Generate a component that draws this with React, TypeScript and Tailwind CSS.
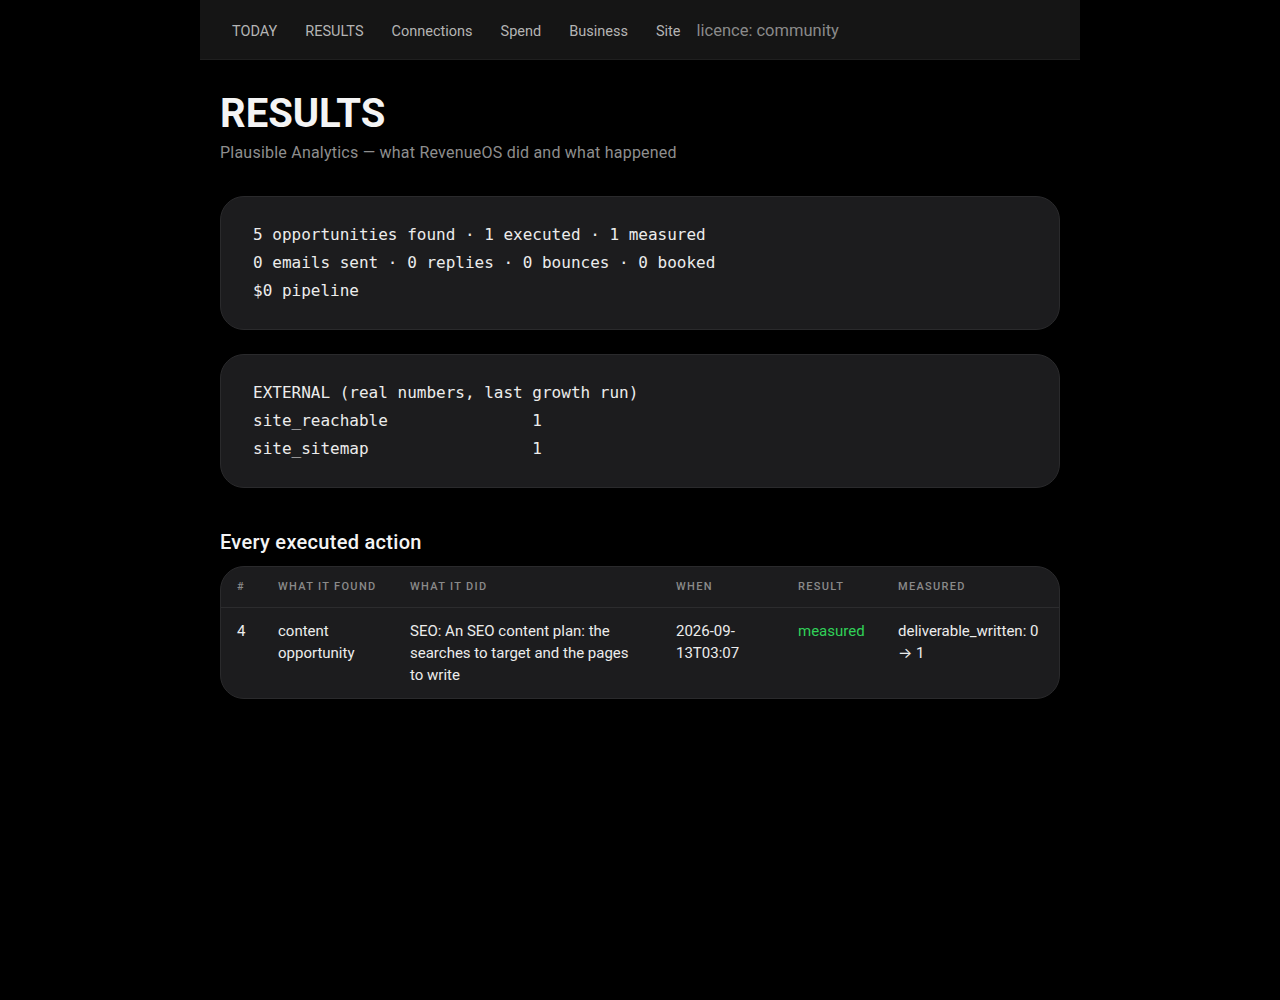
import React from 'react';

const navItems = ['TODAY', 'RESULTS', 'Connections', 'Spend', 'Business', 'Site'];

const summary = [
  '5 opportunities found · 1 executed · 1 measured',
  '0 emails sent · 0 replies · 0 bounces · 0 booked',
  '$0 pipeline',
];

const external = [
  'EXTERNAL (real numbers, last growth run)',
  'site_reachable               1',
  'site_sitemap                 1',
];

const actions = [
  {
    id: 4,
    found: 'content opportunity',
    did: 'SEO: An SEO content plan: the searches to target and the pages to write',
    when: '2026-09-13T03:07',
    result: 'measured',
    measured: 'deliverable_written: 0 → 1',
  },
];

function MonoCard({ lines }: { lines: string[] }) {
  return (
    <div className="mb-6 rounded-3xl border border-[#2a2a2c] bg-[#1c1c1e] px-8 py-6">
      <pre className="font-['DejaVu_Sans_Mono',monospace] text-base leading-7 text-[#ececec] whitespace-pre">
        {lines.join('\n')}
      </pre>
    </div>
  );
}

export default function App() {
  return (
    <div className="min-h-screen bg-black font-['Roboto','Inter',sans-serif] text-white">
      <div className="mx-auto w-[880px]">
        <nav className="flex h-[60px] items-center gap-1 border-b border-[#1f1f1f] bg-[#151515] px-5 pt-1">
          {navItems.map((item) => (
            <a key={item} className="px-3 text-[14.5px] text-[#b4b4b4]">
              {item}
            </a>
          ))}
          <span className="text-[16.5px] text-[#8a8a8a]">licence: community</span>
        </nav>

        <main className="px-5 pt-[30px]">
          <h1 className="text-[40px] font-bold leading-[1.2] text-[#f4f4f4]">RESULTS</h1>
          <p className="mt-[3px] mb-[31px] text-base tracking-[0.014em] text-[#8e8e8e]">
            Plausible Analytics — what RevenueOS did and what happened
          </p>

          <MonoCard lines={summary} />
          <MonoCard lines={external} />

          <h2 className="mt-[40px] mb-2.5 text-xl font-medium tracking-[0.015em] text-[#f4f4f4]">Every executed action</h2>
          <div className="overflow-hidden rounded-3xl border border-[#2a2a2c] bg-[#1c1c1e]">
            <table className="w-full table-fixed text-left">
              <colgroup>
                <col className="w-[41px]" />
                <col className="w-[132px]" />
                <col className="w-[266px]" />
                <col className="w-[122px]" />
                <col className="w-[100px]" />
                <col />
              </colgroup>
              <thead>
                <tr className="border-b border-[#2c2c2e] text-[11px] uppercase tracking-[0.12em] text-[#8a8a8a]">
                  <th className="px-4 py-3 font-medium leading-4">#</th>
                  <th className="px-4 py-3 font-medium leading-4">What it found</th>
                  <th className="px-4 py-3 font-medium leading-4">What it did</th>
                  <th className="px-4 py-3 font-medium leading-4">When</th>
                  <th className="px-4 py-3 font-medium leading-4">Result</th>
                  <th className="px-4 py-3 font-medium leading-4">Measured</th>
                </tr>
              </thead>
              <tbody className="align-top text-[15px] leading-[22px] text-[#ececec]">
                {actions.map((a) => (
                  <tr key={a.id}>
                    <td className="px-4 py-3">{a.id}</td>
                    <td className="px-4 py-3">{a.found}</td>
                    <td className="px-4 py-3">{a.did}</td>
                    <td className="px-4 py-3">{a.when}</td>
                    <td className="px-4 py-3 text-[#30d158]">{a.result}</td>
                    <td className="px-4 py-3">{a.measured}</td>
                  </tr>
                ))}
              </tbody>
            </table>
          </div>
        </main>
      </div>
    </div>
  );
}
